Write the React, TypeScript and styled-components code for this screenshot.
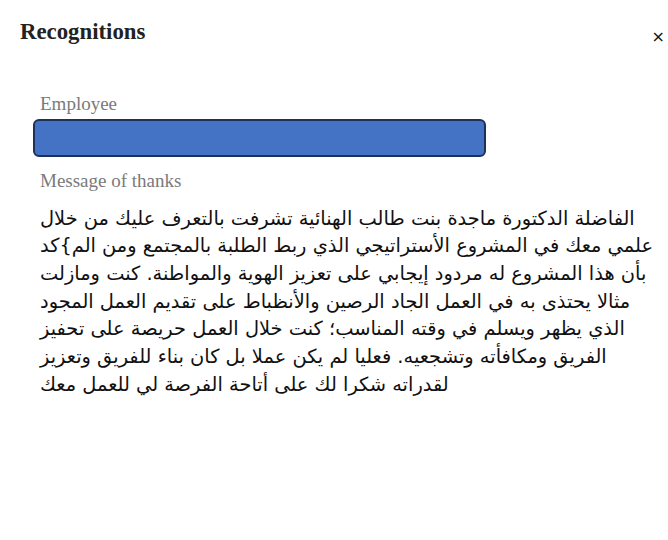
import { createGlobalStyle, styled } from "styled-components";

const GlobalStyle = createGlobalStyle`
  html, body {
    margin: 0;
    padding: 0;
    background: #fff;
  }
`;

const message =
  "الفاضلة الدكتورة ماجدة بنت طالب الهنائية تشرفت بالتعرف عليك من خلال علمي معك في المشروع الأستراتيجي الذي ربط الطلبة بالمجتمع ومن الم}كد بأن هذا المشروع له مردود إيجابي على تعزيز الهوية والمواطنة. كنت ومازلت مثالا يحتذى به في العمل الجاد الرصين والأنظباط على تقديم العمل المجود الذي يظهر ويسلم في وقته المناسب؛ كنت خلال العمل حريصة على تحفيز الفريق ومكافأته وتشجعيه. فعليا لم يكن عملا بل كان بناء للفريق وتعزيز لقدراته شكرا لك على أتاحة الفرصة لي للعمل معك";

const App = () => {
  return (
    <>
      <GlobalStyle />
      <Dialog>
        <Header>
          <Title>Recognitions</Title>
          <Close aria-label="close">×</Close>
        </Header>
        <Form>
          <Label>Employee</Label>
          <Select />
          <Label $top={13}>Message of thanks</Label>
          <Message>{message}</Message>
        </Form>
      </Dialog>
    </>
  );
};

export default App;

const Dialog = styled.div`
  display: flex;
  flex-direction: column;
  width: 668px;
  height: 540px;
  box-sizing: border-box;
  padding: 19px 0 0 20px;
`;

const Header = styled.div`
  display: flex;
  justify-content: space-between;
  align-items: flex-start;
`;

const Title = styled.h1`
  margin: 0;
  font-family: "Liberation Serif", serif;
  font-weight: bold;
  font-size: 22.8px;
  line-height: 26px;
  color: #222;
`;

const Close = styled.button`
  margin: 11px 3px 0 0;
  padding: 0;
  border: none;
  background: none;
  font-family: "DejaVu Sans", sans-serif;
  font-size: 16px;
  line-height: 14px;
  color: #111;
  cursor: pointer;
`;

const Form = styled.div`
  display: flex;
  flex-direction: column;
  padding: 48px 0 0 13px;
`;

const Label = styled.label<{ $top?: number }>`
  margin-top: ${({ $top }) => $top ?? 0}px;
  padding-left: 7px;
  font-family: "Liberation Serif", serif;
  font-size: 19px;
  line-height: 22px;
  color: #7a7a7a;
`;

const Select = styled.div`
  margin-top: 4px;
  width: 453px;
  height: 37.5px;
  box-sizing: border-box;
  border: 2px solid #1c3258;
  border-radius: 6px;
  background: #4472c4;
`;

const Message = styled.p`
  margin: 13px 0 0;
  padding-left: 7px;
  width: 620px;
  font-family: "DejaVu Sans", sans-serif;
  font-size: 19.4px;
  line-height: 27.7px;
  color: #111;
  text-align: left;
`;
